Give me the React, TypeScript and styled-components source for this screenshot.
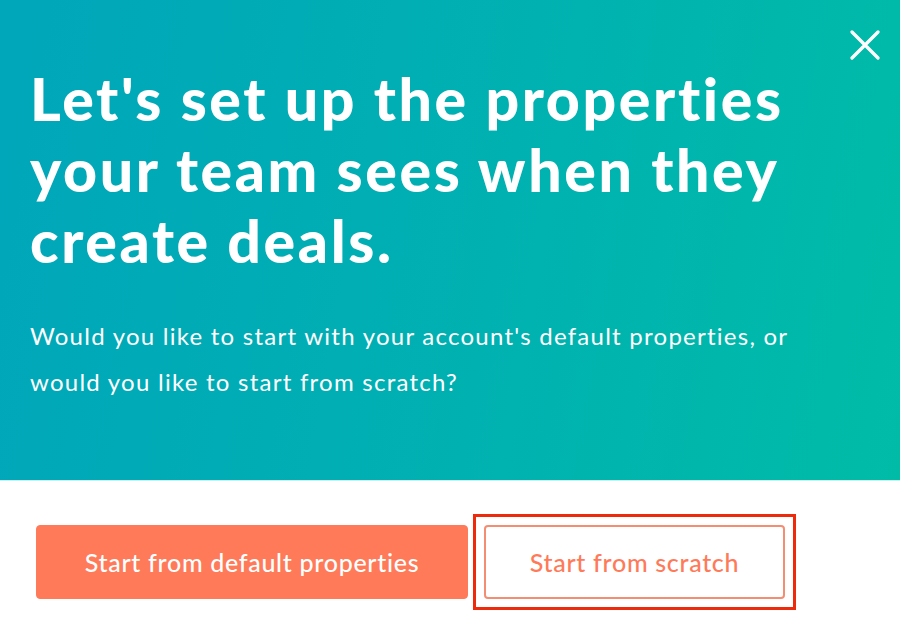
import * as React from 'react';
import styled, { createGlobalStyle } from 'styled-components';

const GlobalStyle = createGlobalStyle`
    html, body {
        margin: 0;
        padding: 0;
        background: #ffffff;
    }
    body {
        font-family: Lato, "Open Sans", sans-serif;
        -webkit-font-smoothing: antialiased;
    }
`;

const App = () => {
    return (
        <Modal>
            <GlobalStyle />
            <Header>
                <CloseButton aria-label="Close">
                    <svg width="30" height="30" viewBox="0 0 30 30">
                        <path
                            d="M2 2 L28 28 M28 2 L2 28"
                            stroke="#ffffff"
                            strokeWidth="3.2"
                            strokeLinecap="round"
                        />
                    </svg>
                </CloseButton>
                <Title>
                    Let's set up the properties your team sees when they
                    create deals.
                </Title>
                <Description>
                    Would you like to start with your account's default
                    properties, or would you like to start from scratch?
                </Description>
            </Header>
            <Footer>
                <Button variant="primary">Start from default properties</Button>
                <Highlight>
                    <Button variant="secondary">Start from scratch</Button>
                </Highlight>
            </Footer>
        </Modal>
    );
};

const Modal = styled.div`
    width: 900px;
    height: 625px;
    overflow: hidden;
    background: #ffffff;
`;

const Header = styled.div`
    position: relative;
    box-sizing: border-box;
    height: 481px;
    padding: 63px 0 0 30px;
    background: linear-gradient(100deg, #00a6ba 0%, #00b1b1 55%, #00bca7 100%);
    border-bottom: 1px solid #c9f2ef;
`;

const CloseButton = styled.button`
    position: absolute;
    top: 30px;
    right: 20px;
    padding: 0;
    border: none;
    background: none;
    cursor: pointer;
    line-height: 0;
`;

const Title = styled.h1`
    max-width: 790px;
    margin: 0;
    color: #ffffff;
    font-size: 59px;
    font-weight: 900;
    line-height: 71px;
    letter-spacing: 2.6px;
`;

const Description = styled.p`
    max-width: 790px;
    margin: 37px 0 0;
    color: #ffffff;
    font-size: 24px;
    font-weight: 400;
    line-height: 46px;
    letter-spacing: 1.25px;
`;

const Footer = styled.div`
    display: flex;
    align-items: center;
    gap: 5px;
    padding: 33px 0 0 36px;
`;

const Button = styled.button<{ variant: 'primary' | 'secondary' }>`
    box-sizing: border-box;
    height: 74px;
    border-radius: 4px;
    font-family: Lato, "Open Sans", sans-serif;
    font-size: 25px;
    font-weight: 500;
    letter-spacing: 0.7px;
    cursor: pointer;
    width: ${({ variant }) => (variant === 'primary' ? '432px' : '301px')};
    background: ${({ variant }) =>
        variant === 'primary' ? '#ff7a59' : '#ffffff'};
    color: ${({ variant }) => (variant === 'primary' ? '#ffffff' : '#ff7a59')};
    border: ${({ variant }) =>
        variant === 'primary' ? '1px solid #ff7a59' : '2px solid #f48e72'};
`;

const Highlight = styled.div`
    display: flex;
    padding: 8px;
    border: 3px solid #ee2a0c;
`;

export default App;
